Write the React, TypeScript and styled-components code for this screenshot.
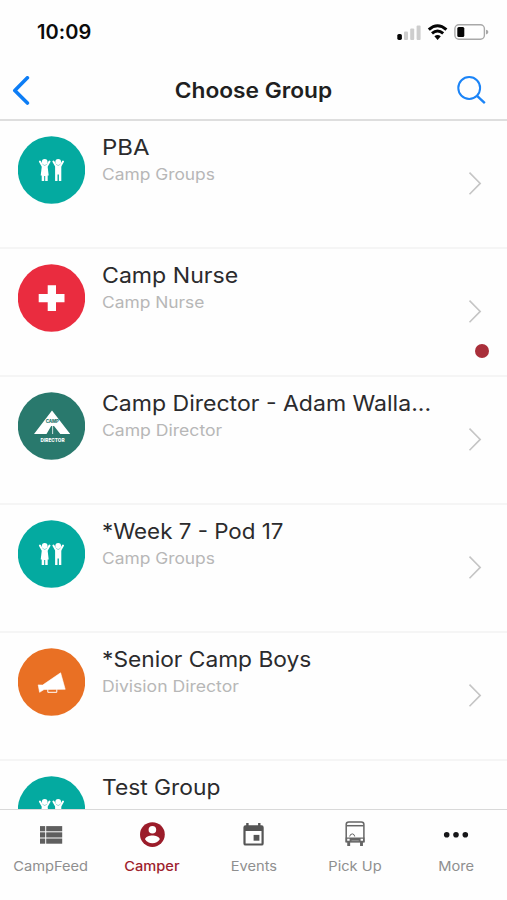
import React from "react";
import styled, { createGlobalStyle } from "styled-components";

const GlobalStyle = createGlobalStyle`
  * { box-sizing: border-box; }
  body { margin: 0; background: #fff; }
`;

const Screen = styled.div`
  width: 507px;
  height: 900px;
  display: flex;
  flex-direction: column;
  overflow: hidden;
  background: #fefefe;
  font-family: Inter, "Open Sans", sans-serif;
  color: #2b2b2d;
`;

const StatusBar = styled.div`
  height: 62px;
  flex: none;
  display: flex;
  justify-content: space-between;
  align-items: center;
  padding: 2px 18px 0 37px;
`;

const Clock = styled.span`
  font-size: 20px;
  font-weight: 600;
  color: #0b0b0c;
  letter-spacing: 0.1px;
`;

const StatusIcons = styled.svg`
  display: block;
  flex: none;
`;

const NavBar = styled.header`
  height: 59px;
  flex: none;
  display: grid;
  grid-template-columns: 60px 1fr 60px;
  align-items: center;
  border-bottom: 2px solid #dedede;
`;

const NavTitle = styled.h1`
  margin: 0;
  text-align: center;
  font-size: 21px;
  line-height: 26px;
  font-weight: 600;
  transform: scaleX(1.082);
  color: #1f1f21;
`;

const NavButton = styled.button<{ $end?: boolean }>`
  border: 0;
  padding: 0 ${(p) => (p.$end ? "21px 0 0" : "0 0 12px")};
  background: none;
  display: flex;
  justify-content: ${(p) => (p.$end ? "flex-end" : "flex-start")};
`;

const List = styled.main`
  flex: 1;
  min-height: 0;
  overflow: hidden;
`;

const Row = styled.article`
  height: 128px;
  display: flex;
  padding: 15px 30px 0 18px;
  border-bottom: 2px solid #f5f5f5;
`;

const Avatar = styled.svg`
  width: 67px;
  height: 68px;
  flex: none;
  display: block;
`;

const Labels = styled.div`
  flex: 1;
  min-width: 0;
  padding-left: 17px;
`;

const Name = styled.h2<{ $stretch: number }>`
  margin: -3px 0 0;
  font-size: 21.4px;
  line-height: 28px;
  font-weight: 400;
  white-space: nowrap;
  transform: scaleX(${(p) => p.$stretch});
  transform-origin: left;
`;

const Role = styled.p<{ $stretch: number }>`
  margin: 2px 0 0;
  font-size: 15.8px;
  line-height: 24px;
  color: #b7b7b7;
  white-space: nowrap;
  transform: scaleX(${(p) => p.$stretch});
  transform-origin: left;
`;

const RowEnd = styled.div`
  width: 20px;
  margin-right: -12px;
  padding-top: 35px;
  display: flex;
  flex-direction: column;
  align-items: flex-start;
  gap: 21px;
`;

const ChevronIcon = styled.svg`
  display: block;
  margin-left: -1px;
`;

const UnreadDot = styled.span`
  width: 14px;
  height: 14px;
  border-radius: 50%;
  background: #a92f3a;
  align-self: flex-end;
`;

const TabBar = styled.nav`
  height: 91px;
  flex: none;
  display: grid;
  grid-template-columns: repeat(5, 1fr);
  border-top: 1px solid #d9d9d9;
`;

const Tab = styled.a<{ $active?: boolean }>`
  display: flex;
  flex-direction: column;
  align-items: center;
  padding-top: 11px;
  color: ${(p) => (p.$active ? "#9e1f2e" : "#8f8f8f")};
  font-weight: ${(p) => (p.$active ? 500 : 400)};
`;

const TabLabel = styled.span`
  margin-top: 7px;
  font-size: 13.2px;
  line-height: 20px;
  white-space: nowrap;
  transform: scaleX(1.11);
`;

type Badge = "kids" | "nurse" | "director" | "megaphone";

const badgeColor: Record<Badge, string> = {
  kids: "#04aaa0",
  nurse: "#ea2c3f",
  director: "#29796d",
  megaphone: "#e97024",
};

const Kid = ({ dress }: { dress?: boolean }) => (
  <g fill="#fff">
    <circle cx="0" cy="26" r="2.9" />
    <path d="M-4.8 25.6 L-2.5 29.6 L0 31 L2.5 29.6 L4.8 25.6" fill="none" stroke="#fff" strokeWidth="2" strokeLinecap="round" strokeLinejoin="round" />
    {dress ? (
      <path d="M-2.8 29.5 H2.8 L4 39.5 H3 V45 H.5 V40 H-.5 V45 H-3 V39.5 H-4Z" />
    ) : (
      <path d="M-3.1 29.5 H3.1 V45 H.7 V38.5 H-.7 V45 H-3.1Z" />
    )}
  </g>
);

const BadgeArt = ({ kind }: { kind: Badge }) => (
  <Avatar viewBox="0 0 67 68">
    <circle cx="33.5" cy="34" r="33.7" fill={badgeColor[kind]} />
    {kind === "kids" && (
      <>
        <g transform="translate(26.7 0)"><Kid dress /></g>
        <g transform="translate(40.2 0)"><Kid /></g>
      </>
    )}
    {kind === "nurse" && <path d="M29.7 21.3 H38 V30 H46.5 V38.3 H38 V47 H29.7 V38.3 H20.7 V30 H29.7Z" fill="#fff" />}
    {kind === "director" && (
      <>
        <path d="M34 18.5 L52.2 42 H42.3 L36 34 H35.1 V42 H34.3 V34 H33.2 L28.5 42 H16 Z" fill="#fff" />
        <text x="34.3" y="31.4" textAnchor="middle" fontSize="4.4" fontWeight="800" fill="#29796d" fontFamily="Inter, sans-serif" textLength="13">CAMP</text>
        <text x="34.6" y="49.7" textAnchor="middle" fontSize="5.2" fontWeight="800" fill="#fff" fontFamily="Inter, sans-serif" textLength="24" lengthAdjust="spacingAndGlyphs">DIRECTOR</text>
      </>
    )}
    {kind === "megaphone" && (
      <>
        <path d="M42.6 24.8 L47.2 41.3 L26 41.5 L21.6 44.3 L20.2 36.9 L24.6 37.1Z" fill="#fff" stroke="#fff" strokeWidth=".6" strokeLinejoin="round" />
        <path d="M29.8 41.3 V44.3 H38.8 V41.3" fill="none" stroke="#fff" strokeWidth="1" />
      </>
    )}
  </Avatar>
);

const Chevron = () => (
  <ChevronIcon width="14" height="24" viewBox="0 0 14 24">
    <path d="M1.5 1.6 L12.2 12.4 L1.5 23.2" fill="none" stroke="#c5c5c5" strokeWidth="1.6" />
  </ChevronIcon>
);

type Group = {
  name: string;
  nameStretch: number;
  role?: string;
  roleStretch?: number;
  badge: Badge;
  unread?: boolean;
};

const groups: Group[] = [
  { name: "PBA", nameStretch: 1.12, role: "Camp Groups", roleStretch: 1.1, badge: "kids" },
  { name: "Camp Nurse", nameStretch: 1.08, role: "Camp Nurse", roleStretch: 1.1, badge: "nurse", unread: true },
  { name: "Camp Director - Adam Walla...", nameStretch: 1.077, role: "Camp Director", roleStretch: 1.113, badge: "director" },
  { name: "*Week 7 - Pod 17", nameStretch: 1.045, role: "Camp Groups", roleStretch: 1.1, badge: "kids" },
  { name: "*Senior Camp Boys", nameStretch: 1.063, role: "Division Director", roleStretch: 1.113, badge: "megaphone" },
  { name: "Test Group", nameStretch: 1.065, badge: "kids" },
];

const FeedIcon = () => (
  <svg width="28" height="28" viewBox="0 0 28 28" fill="#5f5f5f">
    {[5.1, 11.3, 17.5].map((y) => (
      <g key={y}>
        <rect x="3" y={y} width="5.2" height="5.2" />
        <rect x="9.2" y={y} width="16" height="5.2" />
      </g>
    ))}
  </svg>
);

const CamperIcon = () => (
  <svg width="28" height="28" viewBox="0 0 28 28">
    <circle cx="14.4" cy="13.6" r="12.4" fill="#9b1c2a" />
    <circle cx="14.4" cy="8.7" r="3.8" fill="#fff" />
    <path d="M7 18.3 C7.2 15.8 11.4 14.5 14.4 14.5 S21.6 15.8 21.8 18.3 C20.2 20.8 17.5 22.3 14.4 22.3 S8.6 20.8 7 18.3Z" fill="#fff" />
  </svg>
);

const EventsIcon = () => (
  <svg width="28" height="28" viewBox="0 0 28 28" fill="#555">
    <path fillRule="evenodd" d="M7.2 1.9 H9.6 V4.3 H19.1 V1.9 H21.5 V4.3 H22.6 Q24.7 4.3 24.7 6.4 V22.4 Q24.7 24.6 22.6 24.6 H6.5 Q4.4 24.6 4.4 22.4 V6.4 Q4.4 4.3 6.5 4.3 H7.2Z M6.6 9.9 V22.4 H22.5 V9.9Z" />
    <rect x="14.6" y="13.9" width="5.8" height="5.8" />
  </svg>
);

const BusIcon = () => (
  <svg width="28" height="28" viewBox="0 0 28 28" fill="none" stroke="#666" strokeWidth="1.5">
    <path d="M5.2 20.5 V3.5 Q5.2 1 7.8 1 H20.3 Q22.9 1 22.9 3.5 V20.5Z" />
    <path d="M5.5 4.7 H22.6" />
    <path d="M8.7 15.5 Q9 12.8 11.5 12.9 Q13.5 13.2 13.7 15.5" strokeWidth="1" />
    <path d="M4.6 16.5 H23.5 V21.5 H4.6Z" fill="#666" stroke="none" />
    <path d="M6.2 18.8 H8.6 M19.6 18.8 H22" stroke="#fff" strokeWidth="2" />
    <path d="M10.5 19.7 H17.8" stroke="#aaa" strokeWidth=".7" />
    <path d="M7.7 21 V25 M20.5 21 V25" strokeWidth="2.9" />
  </svg>
);

const MoreIcon = () => (
  <svg width="28" height="28" viewBox="0 0 28 28" fill="#171719">
    <circle cx="4.7" cy="13.7" r="2.8" />
    <circle cx="14" cy="13.7" r="2.8" />
    <circle cx="23.3" cy="13.7" r="2.8" />
  </svg>
);

const tabs = [
  { label: "CampFeed", Icon: FeedIcon },
  { label: "Camper", Icon: CamperIcon, active: true },
  { label: "Events", Icon: EventsIcon },
  { label: "Pick Up", Icon: BusIcon },
  { label: "More", Icon: MoreIcon },
];

export default function App() {
  return (
    <>
      <GlobalStyle />
      <Screen>
        <StatusBar>
          <Clock>10:09</Clock>
          <StatusIcons width="92" height="20" viewBox="0 0 92 20">
            <rect x="0.3" y="11.9" width="4.6" height="6" rx="1.6" fill="#050505" />
            <g fill="#cdcdcd">
              <rect x="7" y="9.4" width="4" height="8.5" rx="1" />
              <rect x="13.2" y="6.4" width="4" height="11.5" rx="1" />
              <rect x="19.6" y="3.4" width="4" height="14.5" rx="1" />
            </g>
            <g fill="none" stroke="#050505" strokeWidth="3">
              <path d="M31.8 7.6 Q40.5 -.2 49.4 7.6" />
              <path d="M35 11.4 Q40.5 6.6 46.2 11.4" />
            </g>
            <path d="M37.4 14.2 Q40.6 11.7 43.8 14.2 L40.6 17.9Z" fill="#050505" />
            <rect x="57.9" y="2.8" width="29.5" height="14.5" rx="4" fill="none" stroke="#a8a8a8" strokeWidth="1.4" />
            <rect x="60.3" y="5.1" width="7" height="10" rx="1.5" fill="#050505" />
            <path d="M89 7.7 Q91.4 8.2 91.4 10.1 T89 12.5Z" fill="#a8a8a8" />
          </StatusIcons>
        </StatusBar>
        <NavBar>
          <NavButton aria-label="Back">
            <svg width="18" height="30" viewBox="0 0 18 30">
              <path d="M15.4 1.8 L2.8 14.4 L15.4 27" fill="none" stroke="#0d7df5" strokeWidth="3.6" strokeLinecap="round" strokeLinejoin="round" />
            </svg>
          </NavButton>
          <NavTitle>Choose Group</NavTitle>
          <NavButton $end aria-label="Search">
            <svg width="29" height="29" viewBox="0 0 29 29" fill="none" stroke="#1b84f7" strokeWidth="2">
              <circle cx="12.2" cy="12" r="10.9" />
              <path d="M19.8 19.6 L27.8 27.2" strokeWidth="2.4" />
            </svg>
          </NavButton>
        </NavBar>
        <List>
          {groups.map((g) => (
            <Row key={g.name}>
              <BadgeArt kind={g.badge} />
              <Labels>
                <Name $stretch={g.nameStretch}>{g.name}</Name>
                {g.role && <Role $stretch={g.roleStretch ?? 1}>{g.role}</Role>}
              </Labels>
              <RowEnd>
                <Chevron />
                {g.unread && <UnreadDot />}
              </RowEnd>
            </Row>
          ))}
        </List>
        <TabBar>
          {tabs.map(({ label, Icon, active }) => (
            <Tab key={label} $active={active}>
              <Icon />
              <TabLabel>{label}</TabLabel>
            </Tab>
          ))}
        </TabBar>
      </Screen>
    </>
  );
}
